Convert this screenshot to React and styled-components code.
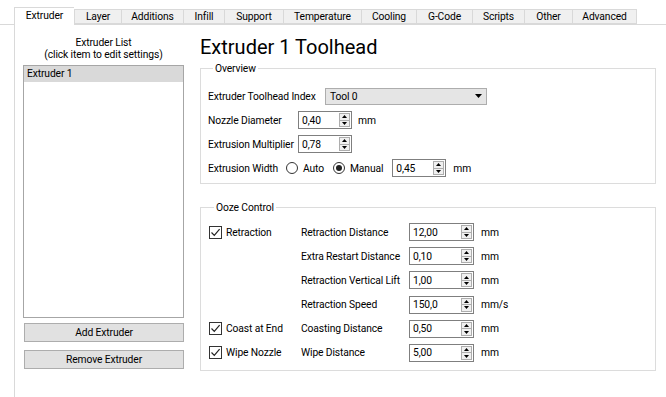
import React from "react";
import styled, { createGlobalStyle } from "styled-components";

const GlobalStyle = createGlobalStyle`
  html, body {
    margin: 0;
    padding: 0;
    background: #ffffff;
    overflow: hidden;
  }
  body {
    font-family: Roboto, "Liberation Sans", Arial, sans-serif;
    font-size: 10.3px;
    letter-spacing: -0.12px;
    color: #000;
  }
`;

const Window = styled.div`
  width: 666px;
  height: 397px;
  display: flex;
  flex-direction: column;
`;

const TabBar = styled.div`
  display: flex;
  align-items: flex-end;
  height: 25px;
  padding-left: 14px;
  border-bottom: 1px solid #d9d9d9;
  box-sizing: border-box;
`;

const Tab = styled.div`
  width: ${(p) => p.$w}px;
  height: ${(p) => (p.$active ? 18 : 15)}px;
  margin-bottom: ${(p) => (p.$active ? -1 : 0)}px;
  box-sizing: border-box;
  display: flex;
  align-items: center;
  justify-content: center;
  padding-bottom: ${(p) => (p.$active ? 2 : 0)}px;
  background: ${(p) => (p.$active ? "#ffffff" : "#f0f0f0")};
  border: 1px solid #d9d9d9;
  border-bottom: ${(p) => (p.$active ? "none" : "1px solid #d9d9d9")};
  border-right: ${(p) => (p.$last ? "1px solid #d9d9d9" : "none")};
  position: relative;
  z-index: ${(p) => (p.$active ? 1 : 0)};
`;

const Pane = styled.div`
  flex: 1;
  display: flex;
  margin-left: 14px;
  border-left: 1px solid #d9d9d9;
`;

const LeftCol = styled.div`
  width: 170px;
  padding: 12px 0 0 8px;
  box-sizing: border-box;
  display: flex;
  flex-direction: column;
`;

const ListCaption = styled.div`
  width: 161px;
  text-align: center;
  line-height: 11.5px;
`;

const ListBox = styled.div`
  width: 161px;
  height: 253px;
  margin-top: 5px;
  border: 1px solid #a6a6a6;
  box-sizing: border-box;
  background: #fff;
`;

const ListItem = styled.div`
  height: 16px;
  line-height: 16px;
  padding-left: 3px;
  background: ${(p) => (p.$selected ? "#d9d9d9" : "transparent")};
`;

const PushButton = styled.button`
  width: 160px;
  height: 19px;
  margin: ${(p) => p.$top}px 0 0 1px;
  padding: 0;
  background: #e1e1e1;
  border: 1px solid #adadad;
  font: inherit;
  letter-spacing: inherit;
  color: #000;
  box-sizing: border-box;
`;

const RightCol = styled.div`
  width: 471px;
  padding: 11px 0 0 15px;
  box-sizing: border-box;
`;

const Title = styled.h1`
  margin: 0;
  font-size: 20px;
  line-height: 22px;
  font-weight: 400;
  letter-spacing: 0;
`;

const GroupBox = styled.fieldset`
  width: 456px;
  margin: ${(p) => p.$top}px 0 0 0;
  padding: ${(p) => p.$pad};
  border: 1px solid #dcdcdc;
  box-sizing: border-box;
  min-width: 0;
`;

const GroupTitle = styled.legend`
  margin-left: 5px;
  padding: 0 2px;
  line-height: 13px;
`;

const FormRows = styled.div`
  display: flex;
  flex-direction: column;
  gap: 6px;
`;

const FormRow = styled.div`
  display: flex;
  align-items: center;
  height: 18px;
`;

const Label = styled.span`
  width: ${(p) => (p.$w ? `${p.$w}px` : "auto")};
  flex: none;
  white-space: nowrap;
`;

const Unit = styled.span`
  margin-left: ${(p) => p.$gap ?? 6}px;
`;

const Combo = styled.div`
  width: 162px;
  height: 17px;
  box-sizing: border-box;
  border: 1px solid #adadad;
  background: #e5e5e5;
  display: flex;
  align-items: center;
  justify-content: space-between;
  padding: 0 4px 0 4px;
`;

const SpinFrame = styled.div`
  width: ${(p) => p.$w}px;
  height: 18px;
  margin-left: ${(p) => p.$gap ?? 0}px;
  box-sizing: border-box;
  border: 1px solid #7f7f7f;
  background: #fff;
  display: flex;
  align-items: stretch;
  flex: none;
`;

const SpinText = styled.span`
  flex: 1;
  padding-left: 3px;
  display: flex;
  align-items: center;
`;

const SpinArrows = styled.div`
  width: 11px;
  margin: 1px 1px 1px 0;
  box-sizing: border-box;
  border: 1px solid #adadad;
  background: #f0f0f0;
  display: flex;
  flex-direction: column;
`;

const SpinHalf = styled.div`
  flex: 1;
  display: flex;
  align-items: center;
  justify-content: center;
  border-top: ${(p) => (p.$down ? "1px solid #adadad" : "none")};
`;

const RadioOption = styled.label`
  display: flex;
  align-items: center;
  gap: 5px;
  margin-right: ${(p) => p.$after}px;
`;

const RadioDot = styled.span`
  width: 12px;
  height: 12px;
  box-sizing: border-box;
  border: 1px solid #333;
  border-radius: 50%;
  background: #fff;
  display: flex;
  align-items: center;
  justify-content: center;
  &::after {
    content: "";
    width: 6px;
    height: 6px;
    border-radius: 50%;
    background: ${(p) => (p.$on ? "#222" : "transparent")};
  }
`;

const OozeGrid = styled.div`
  display: grid;
  grid-template-columns: 92px 108px 65px auto;
  grid-auto-rows: 18px;
  row-gap: 6.2px;
  align-items: center;
`;

const CheckOption = styled.label`
  grid-column: 1;
  grid-row: ${(p) => p.$row};
  display: flex;
  align-items: center;
  gap: 4px;
`;

const CheckBox = styled.span`
  width: 13px;
  height: 13px;
  box-sizing: border-box;
  border: 1px solid #333;
  background: #fff;
  display: flex;
  align-items: center;
  justify-content: center;
`;

const GridLabel = styled.span`
  grid-column: 2;
  grid-row: ${(p) => p.$row};
  white-space: nowrap;
`;

const GridCell = styled.div`
  grid-column: ${(p) => p.$col};
  grid-row: ${(p) => p.$row};
  margin-left: ${(p) => p.$gap ?? 0}px;
`;

const tabs = [
  ["Extruder", 60],
  ["Layer", 47],
  ["Additions", 62],
  ["Infill", 41],
  ["Support", 59],
  ["Temperature", 78],
  ["Cooling", 55],
  ["G-Code", 56],
  ["Scripts", 52],
  ["Other", 48],
  ["Advanced", 65],
];

const oozeRows = [
  { label: "Retraction Distance", value: "12,00", unit: "mm" },
  { label: "Extra Restart Distance", value: "0,10", unit: "mm" },
  { label: "Retraction Vertical Lift", value: "1,00", unit: "mm" },
  { label: "Retraction Speed", value: "150,0", unit: "mm/s" },
  { label: "Coasting Distance", value: "0,50", unit: "mm" },
  { label: "Wipe Distance", value: "5,00", unit: "mm" },
];

const checks = [
  { label: "Retraction", row: 1 },
  { label: "Coast at End", row: 5 },
  { label: "Wipe Nozzle", row: 6 },
];

function Arrow({ down }) {
  return (
    <svg width="5" height="3" viewBox="0 0 5 3">
      <path d={down ? "M0 0H5L2.5 3Z" : "M0 3H5L2.5 0Z"} fill="#000" />
    </svg>
  );
}

function SpinBox({ value, width, gap }) {
  return (
    <SpinFrame $w={width} $gap={gap}>
      <SpinText>{value}</SpinText>
      <SpinArrows>
        <SpinHalf>
          <Arrow />
        </SpinHalf>
        <SpinHalf $down>
          <Arrow down />
        </SpinHalf>
      </SpinArrows>
    </SpinFrame>
  );
}

function Tick() {
  return (
    <svg width="11" height="11" viewBox="0 0 11 11">
      <path d="M1.5 5.5L4.3 8.4L9.6 2.2" fill="none" stroke="#222" strokeWidth="1.2" />
    </svg>
  );
}

export default function App() {
  return (
    <Window>
      <GlobalStyle />
      <TabBar>
        {tabs.map(([name, w], i) => (
          <Tab key={name} $w={w} $active={i === 0} $last={i === tabs.length - 1}>
            {name}
          </Tab>
        ))}
      </TabBar>
      <Pane>
        <LeftCol>
          <ListCaption>
            Extruder List
            <br />
            (click item to edit settings)
          </ListCaption>
          <ListBox>
            <ListItem $selected>Extruder 1</ListItem>
          </ListBox>
          <PushButton $top={5}>Add Extruder</PushButton>
          <PushButton $top={8}>Remove Extruder</PushButton>
        </LeftCol>
        <RightCol>
          <Title>Extruder 1 Toolhead</Title>
          <GroupBox $top={4} $pad="12px 7px 6px 7px">
            <GroupTitle>Overview</GroupTitle>
            <FormRows>
              <FormRow>
                <Label $w={117}>Extruder Toolhead Index</Label>
                <Combo>
                  <span>Tool 0</span>
                  <svg width="7" height="4" viewBox="0 0 7 4">
                    <path d="M0 0H7L3.5 4Z" fill="#000" />
                  </svg>
                </Combo>
              </FormRow>
              <FormRow>
                <Label $w={90}>Nozzle Diameter</Label>
                <SpinBox value="0,40" width={54} />
                <Unit>mm</Unit>
              </FormRow>
              <FormRow>
                <Label $w={90}>Extrusion Multiplier</Label>
                <SpinBox value="0,78" width={54} />
              </FormRow>
              <FormRow>
                <Label $w={78}>Extrusion Width</Label>
                <RadioOption $after={9}>
                  <RadioDot />
                  Auto
                </RadioOption>
                <RadioOption $after={9}>
                  <RadioDot $on />
                  Manual
                </RadioOption>
                <SpinBox value="0,45" width={54} gap={0} />
                <Unit $gap={7}>mm</Unit>
              </FormRow>
            </FormRows>
          </GroupBox>
          <GroupBox $top={17} $pad="9px 8px 8px 8px">
            <GroupTitle>Ooze Control</GroupTitle>
            <OozeGrid>
              {checks.map((c) => (
                <CheckOption key={c.label} $row={c.row}>
                  <CheckBox>
                    <Tick />
                  </CheckBox>
                  {c.label}
                </CheckOption>
              ))}
              {oozeRows.map((r, i) => (
                <React.Fragment key={r.label}>
                  <GridLabel $row={i + 1}>{r.label}</GridLabel>
                  <GridCell $col={3} $row={i + 1}>
                    <SpinBox value={r.value} width={65} />
                  </GridCell>
                  <GridCell $col={4} $row={i + 1} $gap={7}>
                    {r.unit}
                  </GridCell>
                </React.Fragment>
              ))}
            </OozeGrid>
          </GroupBox>
        </RightCol>
      </Pane>
    </Window>
  );
}
